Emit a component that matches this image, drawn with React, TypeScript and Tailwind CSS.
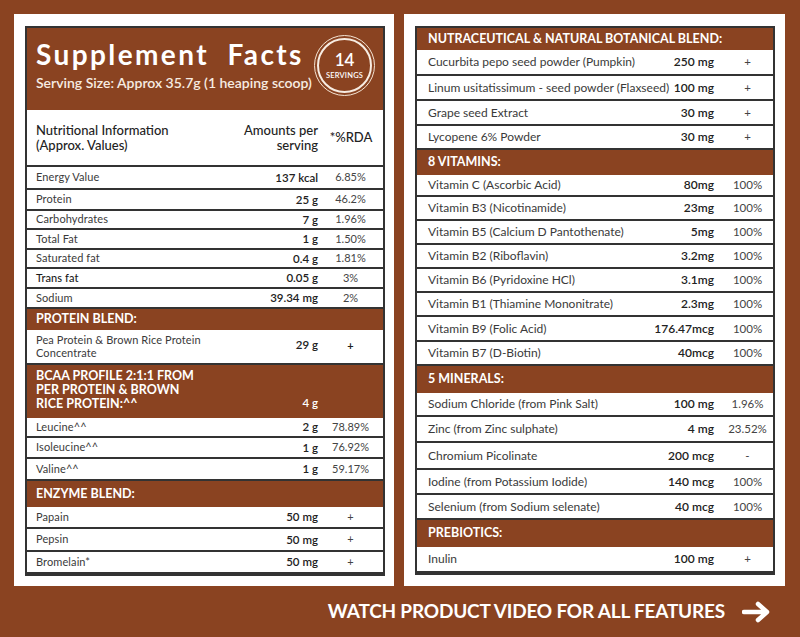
type Row = { name: string; amt: string; rda: string; h: string; dark?: boolean };

const nutrition: Row[] = [
  { name: "Energy Value", amt: "137 kcal", rda: "6.85%", h: "h-[23px]" },
  { name: "Protein", amt: "25 g", rda: "46.2%", h: "h-[21px]" },
  { name: "Carbohydrates", amt: "7 g", rda: "1.96%", h: "h-[19px]" },
  { name: "Total Fat", amt: "1 g", rda: "1.50%", h: "h-[20px]" },
  { name: "Saturated fat", amt: "0.4 g", rda: "1.81%", h: "h-[19px]" },
  { name: "Trans fat", amt: "0.05 g", rda: "3%", h: "h-[20px]", dark: true },
  { name: "Sodium", amt: "39.34 mg", rda: "2%", h: "h-[20px]" },
];

const bcaa: Row[] = [
  { name: "Leucine^^", amt: "2 g", rda: "78.89%", h: "h-[20px]" },
  { name: "Isoleucine^^", amt: "1 g", rda: "76.92%", h: "h-[21px]" },
  { name: "Valine^^", amt: "1 g", rda: "59.17%", h: "h-[22px]" },
];

const enzymes: Row[] = [
  { name: "Papain", amt: "50 mg", rda: "+", h: "h-[22px]" },
  { name: "Pepsin", amt: "50 mg", rda: "+", h: "h-[23px]" },
  { name: "Bromelain*", amt: "50 mg", rda: "+", h: "h-[22px] border-b-0" },
];

const botanical: Row[] = [
  { name: "Cucurbita pepo seed powder (Pumpkin)", amt: "250 mg", rda: "+", h: "h-[26px]" },
  { name: "Linum usitatissimum - seed powder (Flaxseed)", amt: "100 mg", rda: "+", h: "h-[25px]" },
  { name: "Grape seed Extract", amt: "30 mg", rda: "+", h: "h-[25px]" },
  { name: "Lycopene 6% Powder", amt: "30 mg", rda: "+", h: "h-[24px]" },
];

const vitamins: Row[] = [
  { name: "Vitamin C (Ascorbic Acid)", amt: "80mg", rda: "100%", h: "h-[22px]" },
  { name: "Vitamin B3 (Nicotinamide)", amt: "23mg", rda: "100%", h: "h-[24px]" },
  { name: "Vitamin B5 (Calcium D Pantothenate)", amt: "5mg", rda: "100%", h: "h-[24px]" },
  { name: "Vitamin B2 (Riboflavin)", amt: "3.2mg", rda: "100%", h: "h-[24px]" },
  { name: "Vitamin B6 (Pyridoxine HCl)", amt: "3.1mg", rda: "100%", h: "h-[24px]" },
  { name: "Vitamin B1 (Thiamine Mononitrate)", amt: "2.3mg", rda: "100%", h: "h-[24px]" },
  { name: "Vitamin B9 (Folic Acid)", amt: "176.47mcg", rda: "100%", h: "h-[25px]" },
  { name: "Vitamin B7 (D-Biotin)", amt: "40mcg", rda: "100%", h: "h-[24px]" },
];

const minerals: Row[] = [
  { name: "Sodium Chloride (from Pink Salt)", amt: "100 mg", rda: "1.96%", h: "h-[24px]" },
  { name: "Zinc (from Zinc sulphate)", amt: "4 mg", rda: "23.52%", h: "h-[26px]" },
  { name: "Chromium Picolinate", amt: "200 mcg", rda: "-", h: "h-[27px]" },
  { name: "Iodine (from Potassium Iodide)", amt: "140 mcg", rda: "100%", h: "h-[25px]" },
  { name: "Selenium (from Sodium selenate)", amt: "40 mcg", rda: "100%", h: "h-[25px]" },
];

const prebiotics: Row[] = [
  { name: "Inulin", amt: "100 mg", rda: "+", h: "h-[26px] border-b-0" },
];

function LeftRow({ r }: { r: Row }) {
  return (
    <div className={`flex items-center border-b-2 border-[#333] text-[11px] ${r.h}`}>
      <div className={`flex-1 pl-[9px] tracking-[0.1px] ${r.dark ? "text-[#1a1a1a] font-medium" : "text-[#3a3a3a]"}`}>
        {r.name}
      </div>
      <div className="text-right font-semibold text-[11.5px] text-[#222]">{r.amt}</div>
      <div className="w-[65px] text-center text-[#444]">{r.rda}</div>
    </div>
  );
}

function RightRow({ r }: { r: Row }) {
  return (
    <div className={`flex items-center border-b-2 border-[#333] text-[12px] ${r.h}`}>
      <div className="flex-1 pl-[11px] text-[#3a3a3a]">{r.name}</div>
      <div className="text-right font-semibold text-[#222]">{r.amt}</div>
      <div className="w-[59px] pl-[8px] text-center text-[11.5px] text-[#444]">{r.rda}</div>
    </div>
  );
}

function Band({ children, h, pl }: { children: React.ReactNode; h: string; pl: string }) {
  return (
    <div className={`flex items-center bg-[#8a4321] text-white font-bold text-[12.5px] uppercase ${h} ${pl}`}>
      {children}
    </div>
  );
}

export default function App() {
  return (
    <div className="w-[800px] h-[637px] bg-[#8a4321] flex flex-col pt-[14px] pl-[14px] font-['Lato',sans-serif]">
      <div className="flex gap-[10px] h-[572px]">
        {/* left card */}
        <div className="w-[380px] bg-white pt-[12px] pl-[11px]">
          <div className="w-[360px] border-2 border-[#333] flex flex-col">
            <div className="h-[82px] bg-[#8a4321] flex justify-between pl-[9px] pr-[8px]">
              <div className="pt-[11px]">
                <div className="text-[28px] leading-[30px] font-bold text-white tracking-[2.4px]">
                  Supplement&nbsp; Facts
                </div>
                <div className="mt-[5px] text-[14px] leading-[18px] font-semibold text-[#f7ece2]">
                  Serving Size: Approx 35.7g (1 heaping scoop)
                </div>
              </div>
              <div className="mt-[7px] w-[61px] h-[61px] rounded-full border border-[#f3e3d3] p-[2px]">
                <div className="w-full h-full rounded-full border-2 border-[#f7ece2] flex flex-col items-center justify-center text-white">
                  <div className="text-[17px] leading-[17px] font-semibold">14</div>
                  <div className="mt-[3px] text-[7.5px] leading-[9px] font-semibold tracking-[0.2px]">SERVINGS</div>
                </div>
              </div>
            </div>
            <div className="h-[57px] flex items-center border-b-2 border-[#333] text-[13px] leading-[15px] text-[#222] font-medium">
              <div className="flex-1 pl-[9px]">
                Nutritional Information
                <br />
                (Approx. Values)
              </div>
              <div className="text-right">
                Amounts per
                <br />
                serving
              </div>
              <div className="w-[65px] text-center pl-[1px]">*%RDA</div>
            </div>
            {nutrition.map((r) => (
              <LeftRow key={r.name} r={r} />
            ))}
            <Band h="h-[21px]" pl="pl-[9px]">Protein Blend:</Band>
            <div className="h-[35px] flex items-center border-b-2 border-[#333] text-[11px]">
              <div className="flex-1 pl-[9px] leading-[12.5px] tracking-[0.1px] text-[#3a3a3a]">
                Pea Protein &amp; Brown Rice Protein
                <br />
                Concentrate
              </div>
              <div className="text-right font-semibold text-[11.5px] text-[#222] mb-[4px]">29 g</div>
              <div className="w-[65px] text-center text-[#222] font-bold">+</div>
            </div>
            <div className="h-[53px] bg-[#8a4321] flex items-start text-white font-bold text-[12.5px] pt-[4px]">
              <div className="flex-1 pl-[9px] leading-[14px] uppercase">
                BCAA Profile 2:1:1 from
                <br />
                per protein &amp; brown
                <br />
                rice protein:^^
              </div>
              <div className="self-end mb-[7px] text-[11.5px] font-semibold">4 g</div>
              <div className="w-[65px]" />
            </div>
            {bcaa.map((r) => (
              <LeftRow key={r.name} r={r} />
            ))}
            <Band h="h-[26px]" pl="pl-[9px]">Enzyme Blend:</Band>
            {enzymes.map((r) => (
              <LeftRow key={r.name} r={r} />
            ))}
          </div>
        </div>

        {/* right card */}
        <div className="w-[381px] bg-white pt-[12px] pl-[11px]">
          <div className="w-[360px] border-2 border-[#333] flex flex-col">
            <Band h="h-[22px]" pl="pl-[11px]">Nutraceutical &amp; Natural Botanical Blend:</Band>
            {botanical.map((r) => (
              <RightRow key={r.name} r={r} />
            ))}
            <Band h="h-[25px]" pl="pl-[11px]">8 Vitamins:</Band>
            {vitamins.map((r) => (
              <RightRow key={r.name} r={r} />
            ))}
            <Band h="h-[27px]" pl="pl-[11px]">5 Minerals:</Band>
            {minerals.map((r) => (
              <RightRow key={r.name} r={r} />
            ))}
            <Band h="h-[27px]" pl="pl-[11px]">Prebiotics:</Band>
            {prebiotics.map((r) => (
              <RightRow key={r.name} r={r} />
            ))}
          </div>
        </div>
      </div>

      <div className="flex-1 flex items-center justify-end pr-[30px] gap-[17px]">
        <span className="text-white font-bold text-[19px] tracking-[-0.2px]">
          WATCH PRODUCT VIDEO FOR ALL FEATURES
        </span>
        <svg width="28" height="22" viewBox="0 0 28 22" fill="none">
          <path d="M2 11 H25 M16 3 L25 11 L16 19" stroke="white" strokeWidth="4.5" strokeLinecap="round" strokeLinejoin="round" />
        </svg>
      </div>
    </div>
  );
}
